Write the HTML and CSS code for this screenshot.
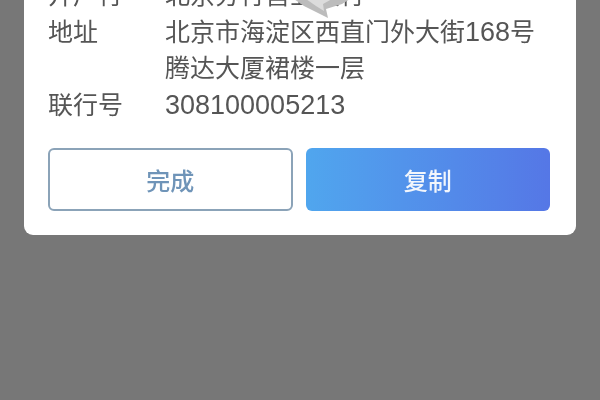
FILE: index.html
```html
<!DOCTYPE html>
<html lang="zh-CN">
<head>
    <meta charset="UTF-8">
    <title>收款账户信息</title>
    <link rel="stylesheet" href="styles.css">
</head>
<body>
    <div class="card">
        <div class="info-row">
            <span class="info-label">开户行</span>
            <span class="info-value">北京分行营业支行</span>
        </div>
        <div class="info-row">
            <span class="info-label">地址</span>
            <span class="info-value">北京市海淀区西直门外大街<span class="num">168</span>号<br>腾达大厦裙楼一层</span>
        </div>
        <div class="info-row">
            <span class="info-label">联行号</span>
            <span class="info-value num">308100005213</span>
        </div>
        <div class="actions">
            <button class="btn btn-done">完成</button>
            <button class="btn btn-copy">复制</button>
        </div>
        <!-- 水印残留 -->
        <svg class="smudge" width="60" height="24" viewBox="0 0 60 24">
            <path d="M4 0 L14 7 L32 16 L38 19 L36 10 L52 5 L60 0 Z" fill="#bcbcbc"/>
            <path d="M16 0 L26 7 L34 12 L33 5 L42 0 Z" fill="#dcdcdc"/>
        </svg>
    </div>
</body>
</html>
```

FILE: styles.css
```css
html, body {
    margin: 0;
    height: 400px;
    overflow: hidden;
}
body {
    padding: 0 24px;
    background-color: #777777;
    font-family: "Liberation Sans", "Noto Sans CJK SC", sans-serif;
}
.card {
    position: relative;
    margin-top: -23px;
    height: 258px;
    box-sizing: border-box;
    padding: 0 26px 0 24px;
    background-color: white;
    border-radius: 9px;
    filter: blur(0.6px);
}
.info-row {
    display: flex;
    font-size: 25px;
    line-height: 36.5px;
    color: #555555;
}
.info-label {
    width: 117px;
    flex-shrink: 0;
}
.num {
    font-size: 27px;
}
.actions {
    display: grid;
    grid-template-columns: 1fr 1fr;
    gap: 13px;
    margin-top: 25px;
}
.btn {
    height: 63px;
    border-radius: 6px;
    font-family: inherit;
    font-size: 24px;
    font-weight: 500;
}
.btn-done {
    background-color: white;
    border: 2px solid #8ba3b8;
    color: #6f94b8;
}
.btn-copy {
    background: linear-gradient(90deg, #50a6ee, #5577e6);
    border: none;
    color: #f2f6fc;
}
.smudge {
    position: absolute;
    left: 266px;
    top: 22px;
}
```
